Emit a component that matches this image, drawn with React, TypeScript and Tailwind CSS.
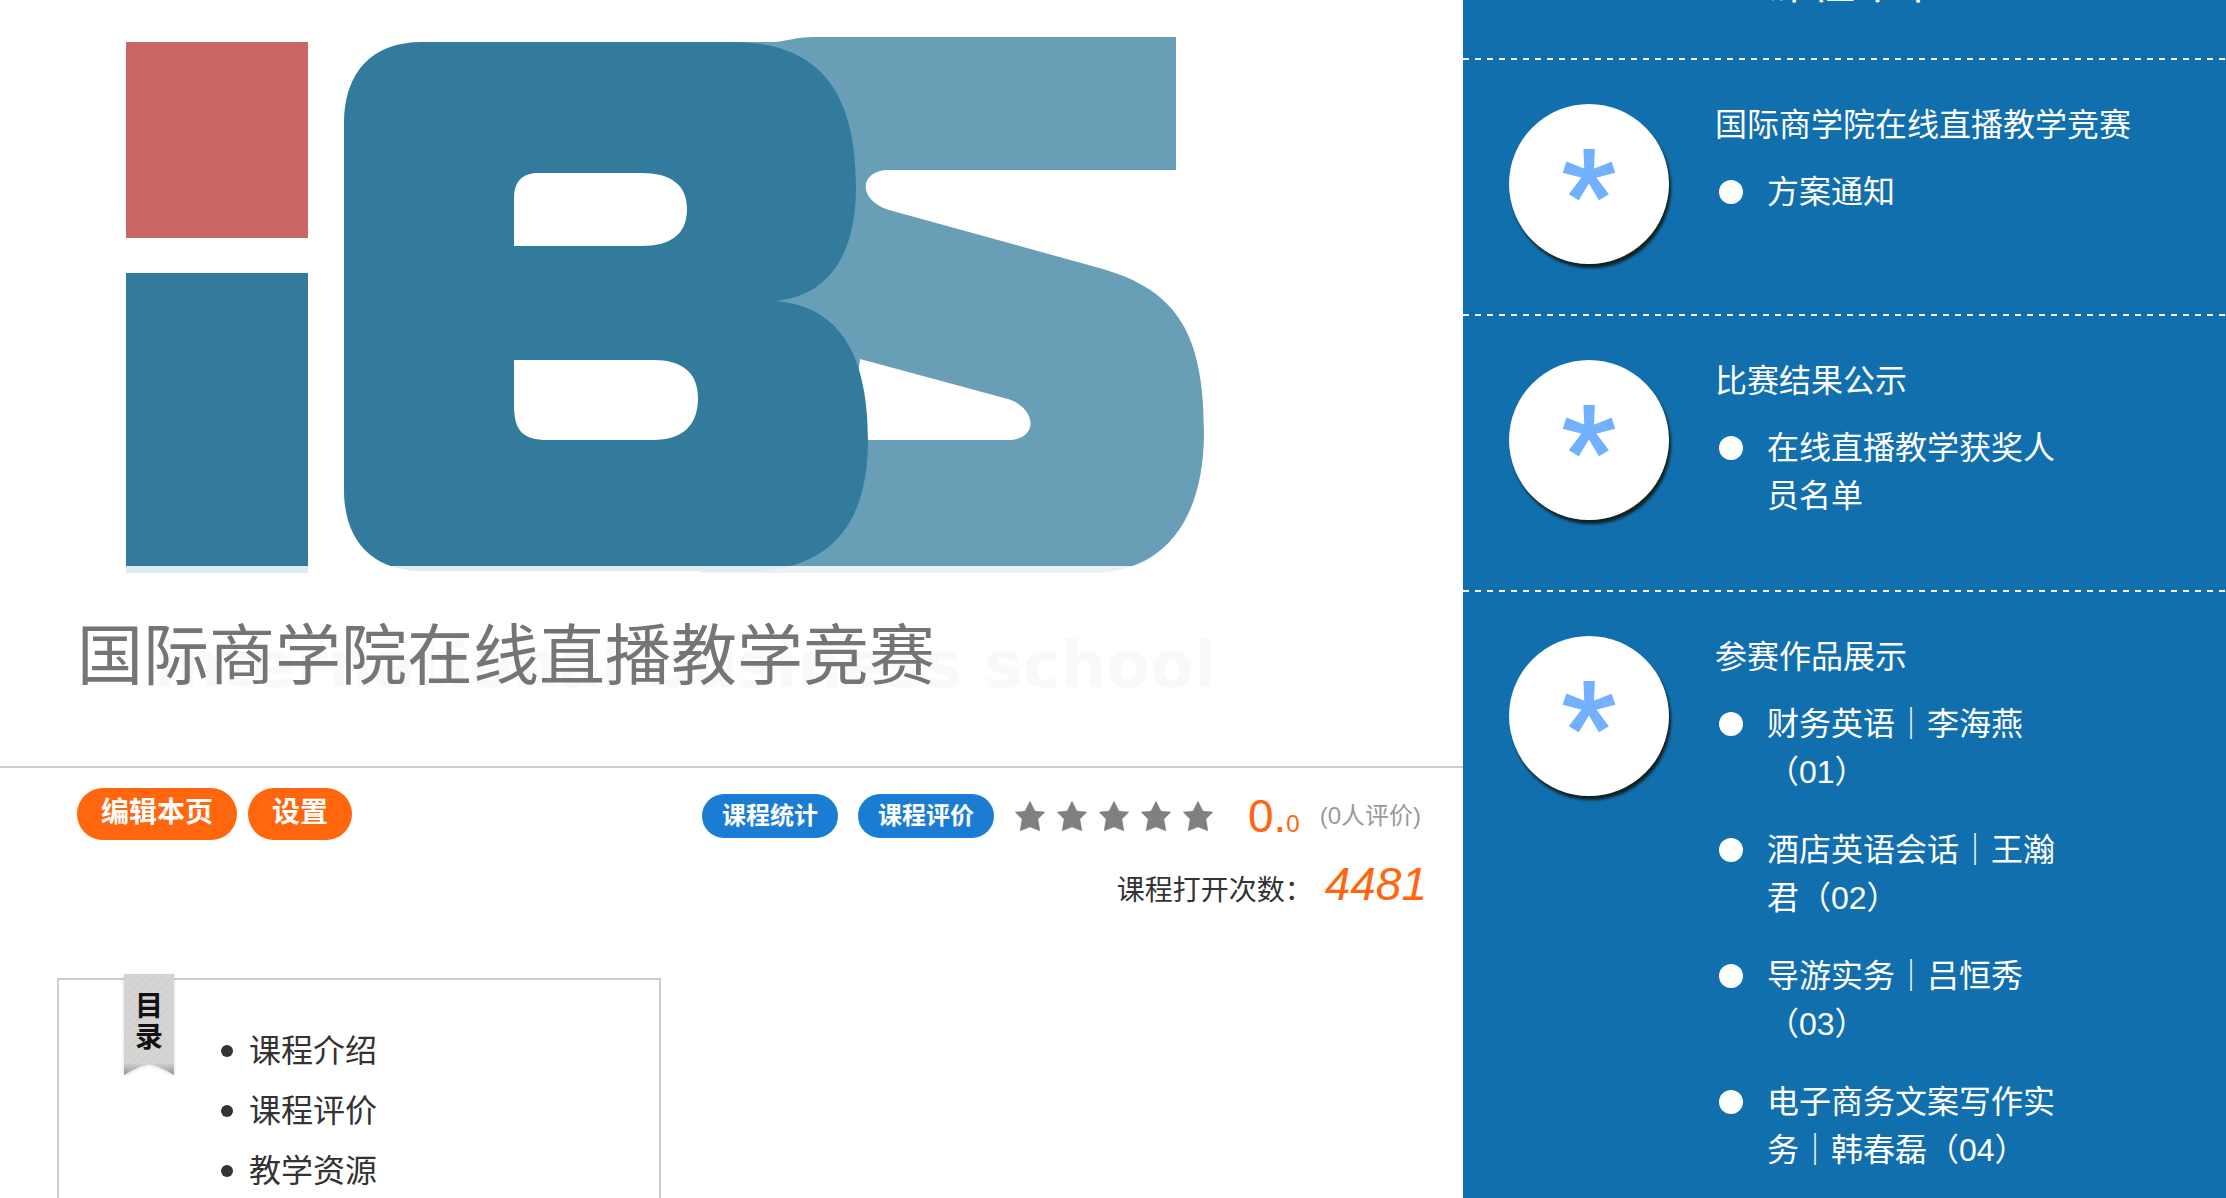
import React from "react";

type Section = {
	title: string;
	items: string[];
};

const sections: Section[] = [
	{ title: "国际商学院在线直播教学竞赛", items: ["方案通知"] },
	{ title: "比赛结果公示", items: ["在线直播教学获奖人员名单"] },
	{
		title: "参赛作品展示",
		items: [
			"财务英语｜李海燕（01）",
			"酒店英语会话｜王瀚君（02）",
			"导游实务｜吕恒秀（03）",
			"电子商务文案写作实务｜韩春磊（04）",
		],
	},
];

const catalog = ["课程介绍", "课程评价", "教学资源"];

function App() {
	return (
		<div className="grid h-screen grid-cols-[1463fr_763fr] overflow-hidden bg-white font-['Liberation_Sans','Noto_Sans_CJK_SC',sans-serif] text-[#333]">
			<main className="min-w-0">
				<Banner />
				<Toolbar />
				<Catalog />
			</main>
			<Sidebar />
		</div>
	);
}

function Banner() {
	return (
		<header className="relative overflow-hidden border-b-2 border-[#ccc]">
			<Logo />
			<div className="absolute inset-x-0 bottom-0 flex h-[200px] items-center bg-white/85 pb-5 pl-[77px]">
				<h1 className="text-[66px] leading-[80px] text-[#757575]">国际商学院在线直播教学竞赛</h1>
			</div>
		</header>
	);
}

function Logo() {
	return (
		<svg className="block" width="1463" height="766" viewBox="0 0 1463 766" role="img" aria-label="IBS">
			<rect x="126" y="42" width="182" height="196" fill="#ca6766" />
			<rect x="126" y="273" width="182" height="300" fill="#327b9d" />
			<path
				fill="#699fb6"
				fillRule="evenodd"
				d="M740 42H775C788 41 795 37 814 37H1176V170H889C859 170 857 200 889 210L1103 269C1178 291 1204 335 1204 432C1204 525 1160 573 1091 573H700V42ZM860 359L1008 399C1037 408 1039 440 1008 440H850Z"
			/>
			<path
				fill="#327b9d"
				d="M422 42H733C826 42 856 100 856 187C856 254 829 296 775 301C842 306 868 358 868 440C868 525 830 566 760 571H422C372 571 344 540 344 490V124C344 72 372 42 422 42Z"
			/>
			<path
				fill="#fff"
				d="M538 173C522 173 514 182 514 198V246H641C670 246 687 235 687 209C687 184 670 173 641 173ZM514 360V405C514 430 522 440 548 440H653C683 440 698 425 698 398C698 373 683 360 653 360Z"
			/>
			<text x="1216" y="687" textAnchor="end" fontSize="64" fill="#d4d4d4" fontFamily="DejaVu Sans, sans-serif" fontWeight="700">
				international business school
			</text>
		</svg>
	);
}

function Star() {
	return (
		<svg width="32" height="32" viewBox="0 0 32 32" fill="#808080">
			<path d="M16 1L21 11L31 12L24 19L26 31L16 27L6 31L8 19L1 12L11 11Z" stroke="#808080" strokeOpacity="0.3" />
		</svg>
	);
}

function Toolbar() {
	const orange = "h-[52px] rounded-full bg-[#ff660d] px-6 pb-[2px] text-[28px] font-bold text-white";
	const blue = "h-11 rounded-full bg-[#1a7dd3] px-5 text-2xl font-bold text-white";

	return (
		<section className="flex justify-between pt-5 pr-9 pl-[77px]">
			<div className="flex gap-[11px]">
				<button className={orange}>编辑本页</button>
				<button className={orange}>设置</button>
			</div>
			<div>
				<div className="mr-[6px] flex h-[56px] items-center gap-5">
					<button className={blue}>课程统计</button>
					<button className={blue}>课程评价</button>
					<div className="flex gap-[10px]">
						{[1, 2, 3, 4, 5].map((n) => (
							<Star key={n} />
						))}
					</div>
					<p className="ml-[14px] text-[46px] leading-none text-[#ff660d]">
						0.<span className="text-2xl">0</span>
					</p>
					<p className="text-2xl text-[#999]">(0人评价)</p>
				</div>
				<p className="mt-3 flex items-baseline justify-end gap-3 text-[28px] leading-[56px]">
					课程打开次数：
					<em className="text-[46px] text-[#ff660d]">4481</em>
				</p>
			</div>
		</section>
	);
}

function Catalog() {
	return (
		<section className="relative mt-[59px] ml-[57px] h-[600px] w-[604px] border-2 border-[#ccc] pt-[41px] pl-[162px]">
			<div className="absolute -top-[7px] left-[63px] w-[54px]">
				<svg className="absolute inset-0 drop-shadow" width="56" height="110" viewBox="0 0 56 110">
					<defs>
						<pattern id="stripes" width="9" height="9" patternUnits="userSpaceOnUse">
							<rect width="9" height="9" fill="#d4d4d4" />
							<path d="M0 9L9 0" stroke="#cbcbcb" />
						</pattern>
						<linearGradient id="fold" x1="0" y1="0" x2="0" y2="1">
							<stop offset="0.88" stopColor="#777" stopOpacity="0" />
							<stop offset="1" stopColor="#777" stopOpacity="0.7" />
						</linearGradient>
					</defs>
					<path d="M2 1H52V102Q36 92 27 91Q18 92 2 102Z" fill="url(#stripes)" />
					<path d="M2 1H52V102Q36 92 27 91Q18 92 2 102Z" fill="url(#fold)" />
				</svg>
				<h2 className="relative flex flex-col items-center pt-[18px] text-[28px] leading-[31px] font-bold text-[#111]">
					<span>目</span>
					<span>录</span>
				</h2>
			</div>
			<ul className="text-[32px] leading-[60px]">
				{catalog.map((item) => (
					<li key={item}>
						<a href="#" className="flex items-center">
							<span className="mr-4 h-3 w-3 rounded-full bg-[#333]" />
							{item}
						</a>
					</li>
				))}
			</ul>
		</section>
	);
}

function Sidebar() {
	return (
		<aside className="overflow-hidden bg-[#126fae] text-white">
			<div className="flex h-[58px] flex-col overflow-hidden pl-[302px]">
				<h2 className="-mt-[38px] text-[45px] leading-[44px]">课程章节</h2>
			</div>
			{sections.map((section) => (
				<SectionBlock key={section.title} section={section} />
			))}
		</aside>
	);
}

function SectionBlock({ section }: { section: Section }) {
	return (
		<section>
			<div className="h-[2px] bg-[repeating-linear-gradient(90deg,#fff_0_6px,transparent_6px_12px)]" />
			<div className="flex items-start gap-[46px] pt-11 pb-10 pl-[46px]">
				<div className="mb-[10px] h-40 w-40 shrink-0 rounded-full bg-white text-center shadow-[2px_4px_3px_#122]">
					<span className="text-[140px] leading-[188px] text-[#73b0ff] [-webkit-text-stroke:2px_#73b0ff]">*</span>
				</div>
				<div>
					<h3 className="mb-[22px] text-[32px] leading-[42px]">{section.title}</h3>
					<ul>
						{section.items.map((item) => (
							<li key={item} className="mb-[30px] flex items-start gap-6 pl-1 text-[32px] leading-[48px]">
								<span className="mt-3 h-6 w-6 shrink-0 rounded-full bg-white" />
								<a href="#" className="w-[300px]">
									{item}
								</a>
							</li>
						))}
					</ul>
				</div>
			</div>
		</section>
	);
}

export default App;
